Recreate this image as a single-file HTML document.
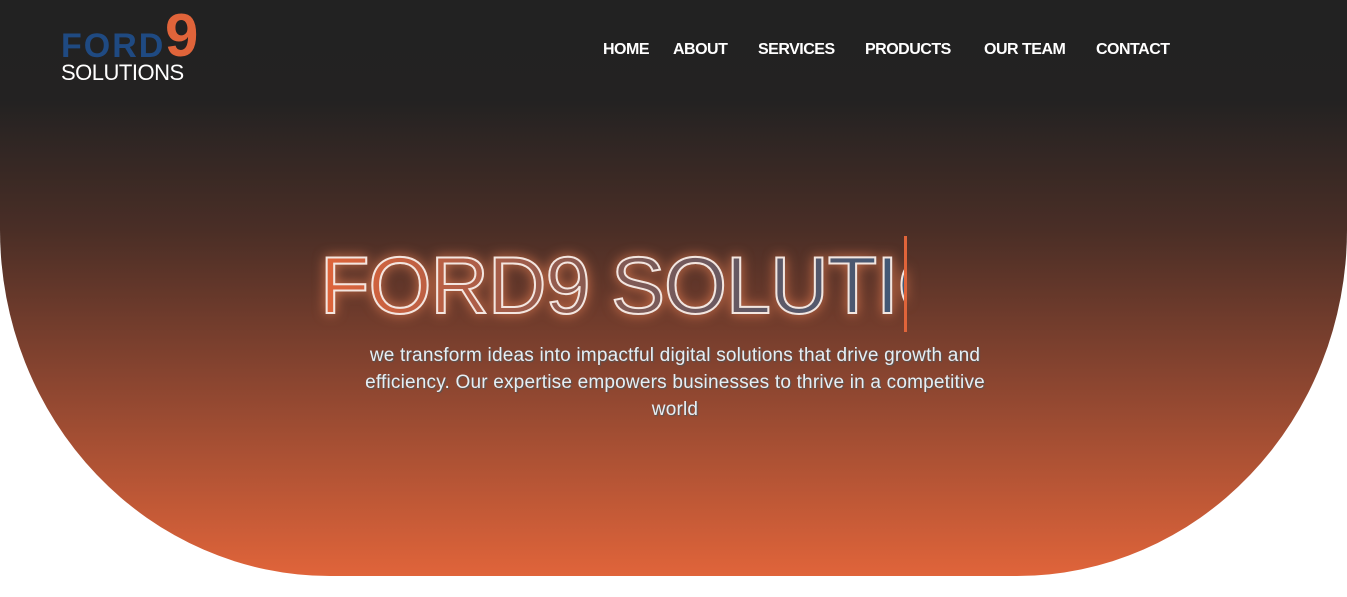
<!DOCTYPE html>
<html><head><style>
html,body{margin:0;padding:0;width:1347px;height:597px;background:#fff;overflow:hidden;font-family:"Liberation Sans",sans-serif}
.hero{position:absolute;left:0;top:0;width:1347px;height:576px;background:linear-gradient(to bottom,#222 0px,#232222 100px,#4a2e26 230px,#8a4530 380px,#e0643a 576px);border-radius:0 0 330px 330px/0 0 346px 346px}
.nav{position:absolute;top:41px;color:#fff;font-size:16px;font-weight:bold;letter-spacing:-0.5px}
.logo1{position:absolute;left:61px;top:27px;font-size:34px;font-weight:900;color:#1f4a82;letter-spacing:2px}
.logo9{position:absolute;left:165px;top:6px;font-size:60px;font-weight:900;color:#e0643a;line-height:60px}
.logo2{position:absolute;left:61px;top:60px;font-size:22px;color:#fff;letter-spacing:-0.5px}
.title{position:absolute;left:320px;top:241px;width:586px;overflow:hidden;white-space:nowrap;font-size:81px;line-height:90px;letter-spacing:-1px;
 background:linear-gradient(to right,#e0643a,#8a5a50 45%,#3f5877 100%);-webkit-background-clip:text;background-clip:text;color:transparent;-webkit-text-stroke:2px #f3e6e0;filter:drop-shadow(0 0 6px rgba(255,140,90,.7))}
.caret{position:absolute;left:904px;top:236px;width:3px;height:96px;background:#e0643a}
.sub{position:absolute;left:350px;top:342px;width:650px;text-align:center;color:#e6eef4;font-size:19px;letter-spacing:0.2px;line-height:27px;text-shadow:1px 1px 1px #555}
</style></head><body>
<div class="hero"></div>
<div class="logo1">FORD</div><div class="logo9">9</div><div class="logo2">SOLUTIONS</div>
<span class="nav" style="left:603px">HOME</span>
<span class="nav" style="left:673px">ABOUT</span>
<span class="nav" style="left:758px">SERVICES</span>
<span class="nav" style="left:865px">PRODUCTS</span>
<span class="nav" style="left:984px">OUR TEAM</span>
<span class="nav" style="left:1096px">CONTACT</span>
<div class="title">FORD9 SOLUTIONS</div>
<div class="caret"></div>
<div class="sub">we transform ideas into impactful digital solutions that drive growth and efficiency. Our expertise empowers businesses to thrive in a competitive world</div>
</body></html>
